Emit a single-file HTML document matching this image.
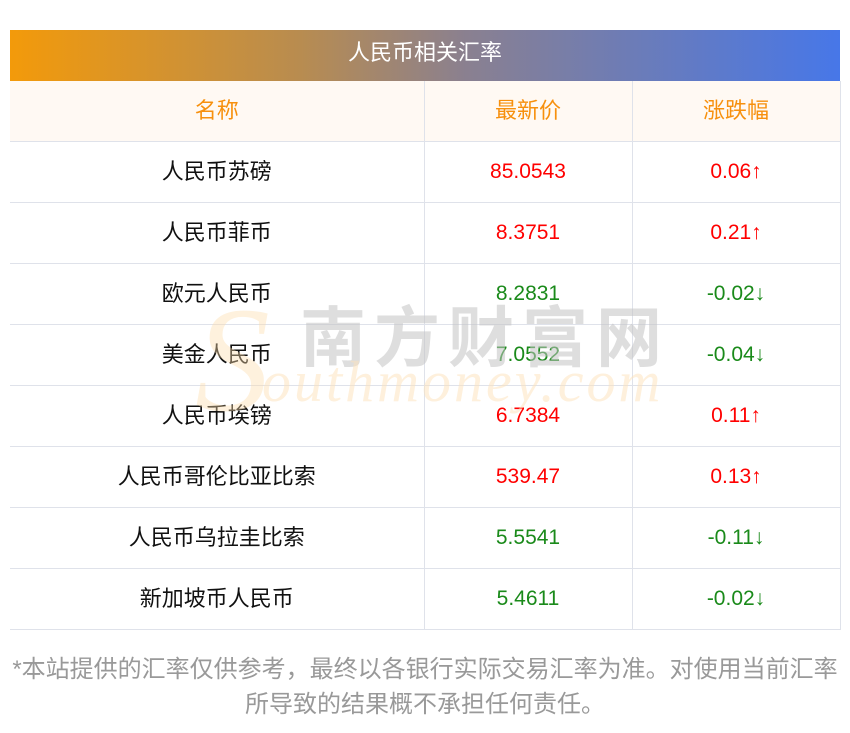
<!DOCTYPE html><html><head><meta charset="utf-8"><style>
body{margin:0;width:850px;height:733px;background:#fff;font-family:"Liberation Sans","Noto Sans CJK SC",sans-serif;position:relative;overflow:hidden}
.t{position:absolute;left:10px;top:30px;width:830px;height:51px;background:linear-gradient(90deg,#f39a0a,#b88c50 35%,#8a8090 55%,#4777e8);color:#fff;font-size:22px;text-align:center;line-height:46px}
table{position:absolute;left:10px;top:81px;width:830px;border-collapse:collapse;table-layout:fixed}
td{height:60px;border:1px solid #dfe2ea;text-align:center;font-size:22px;padding:0;line-height:56px}
.num{font-size:21px}
tr td:first-child{border-left:none}
tr:first-child td{background:#fff9f3;color:#f7900d;height:60px;border-top:none}
.r{color:#f00}.g{color:#1a8a1a}
.n{color:#111}
.f{position:absolute;left:0;width:850px;text-align:center;color:#999;font-size:24px;white-space:nowrap}
.w1{position:absolute;left:300px;top:285px;font-size:66px;color:rgba(195,195,195,.55);letter-spacing:8px;font-family:"Noto Sans CJK SC",sans-serif;font-weight:bold}
.w2{position:absolute;left:262px;top:348px;font-size:58px;color:rgba(253,225,185,.5);font-family:"Liberation Serif",serif;font-style:italic;letter-spacing:3px}
.s{position:absolute;left:195px;top:285px;font-size:150px;color:rgba(253,220,170,.4);font-family:"Liberation Serif",serif;font-style:italic;line-height:1}
</style></head><body>
<div class="t">人民币相关汇率</div>
<table>
<col style="width:414px"><col style="width:208px"><col style="width:208px">
<tr><td>名称</td><td>最新价</td><td>涨跌幅</td></tr>
<tr><td class="n">人民币苏磅</td><td class="r num">85.0543</td><td class="r num">0.06↑</td></tr>
<tr><td class="n">人民币菲币</td><td class="r num">8.3751</td><td class="r num">0.21↑</td></tr>
<tr><td class="n">欧元人民币</td><td class="g num">8.2831</td><td class="g num">-0.02↓</td></tr>
<tr><td class="n">美金人民币</td><td class="g num">7.0552</td><td class="g num">-0.04↓</td></tr>
<tr><td class="n">人民币埃镑</td><td class="r num">6.7384</td><td class="r num">0.11↑</td></tr>
<tr><td class="n">人民币哥伦比亚比索</td><td class="r num">539.47</td><td class="r num">0.13↑</td></tr>
<tr><td class="n">人民币乌拉圭比索</td><td class="g num">5.5541</td><td class="g num">-0.11↓</td></tr>
<tr><td class="n">新加坡币人民币</td><td class="g num">5.4611</td><td class="g num">-0.02↓</td></tr>
</table>
<div class="s">S</div>
<div class="w1">南方财富网</div>
<div class="w2">outhmoney.com</div>
<div class="f" style="top:649px">*本站提供的汇率仅供参考，最终以各银行实际交易汇率为准。对使用当前汇率</div>
<div class="f" style="top:684px">所导致的结果概不承担任何责任。</div>
</body></html>
